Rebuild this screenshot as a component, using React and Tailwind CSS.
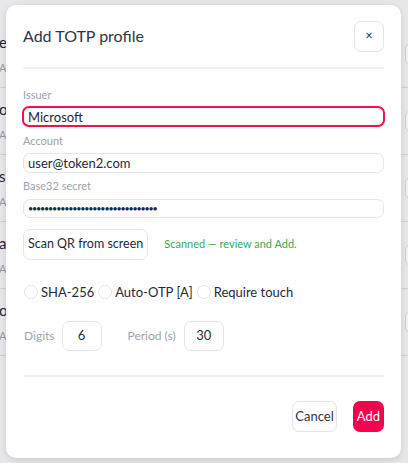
import { useState } from 'react'

const FONT = { fontFamily: 'Lato, "Noto Sans", sans-serif' }

// background list rows (mostly hidden behind the dialog)
const ROWS = ['e', 'o', 's', 'a', 'o']

function Radio({ label }) {
  return (
    <label className="flex items-center gap-[3px]">
      <span className="w-[14px] h-[14px] rounded-full border border-[#e3e5ec] bg-white" />
      <span className="text-[13px] leading-[14px] text-[#1f2937]">{label}</span>
    </label>
  )
}

function Field({ label, children, mt }) {
  return (
    <div className={mt}>
      <div className="text-[11px] leading-[14px] text-[#9ca3af]">{label}</div>
      {children}
    </div>
  )
}

export default function App() {
  const [issuer, setIssuer] = useState('Microsoft')
  const [account, setAccount] = useState('user@token2.com')

  return (
    <div className="relative w-[408px] h-[463px] overflow-hidden bg-[#f4f4f6]" style={FONT}>
      {/* page behind */}
      <div className="flex flex-col pt-[21px]">
        {ROWS.map((c, i) => (
          <div key={i} className="flex justify-between items-center h-[67px] border-b border-[#dcdce0]">
            <div className="-ml-[1px] flex flex-col gap-[10px]">
              <span className="text-[15px] leading-[18px] text-[#1f2937]">{c}</span>
              <span className="text-[11px] leading-[14px] text-[#9ca3af]">A</span>
            </div>
            <div className="w-[30px] h-[22px] mr-[-27px] rounded-md border border-[#d9d9de] bg-white" />
          </div>
        ))}
      </div>
      <div className="absolute inset-0 bg-black/[0.05]" />

      {/* dialog */}
      <div className="absolute left-[6px] top-[5px] w-[395px] h-[453px] rounded-[10px] bg-white shadow-[0_2px_6px_rgba(0,0,0,0.12)] px-[17px] pt-4">
        <div className="flex items-center justify-between h-[30px]">
          <h2 className="text-[16px] leading-[22px] text-[#2d3446]">Add TOTP profile</h2>
          <button className="w-[30px] h-[31px] rounded-[7px] border border-[#e3e5ec] bg-white flex items-center justify-center text-[13px] text-[#2d3446]">
            ×
          </button>
        </div>
        <div className="mt-4 h-[2px] bg-[#eef0f5]" />

        <Field label="Issuer" mt="mt-[19px]">
          <input
            value={issuer}
            onChange={e => setIssuer(e.target.value)}
            className="mt-1 block w-[363px] -ml-[1px] h-[21px] rounded-[7px] border-2 border-[#f0124a] pl-[4px] text-[13px] text-[#1f2937] outline-none"
          />
        </Field>
        <Field label="Account" mt="mt-[7px]">
          <input
            value={account}
            onChange={e => setAccount(e.target.value)}
            className="mt-[5px] block w-full h-[20px] rounded-[7px] border border-[#e3e5ec] pl-[4px] text-[13px] text-[#1f2937] outline-none"
          />
        </Field>
        <Field label="Base32 secret" mt="mt-[6px]">
          <input
            type="password"
            defaultValue="JBSWY3DPEHPK3PXPJBSWY3DPEHPK3PXP"
            className="mt-[6px] block w-full h-[19px] rounded-[7px] border border-[#e3e5ec] pl-[4px] text-[9px] tracking-[-1.2px] text-[#1f2937] outline-none"
          />
        </Field>

        <div className="mt-[11px] flex items-center gap-4">
          <button className="h-[31px] px-[4px] whitespace-nowrap rounded-[7px] border border-[#e3e5ec] bg-white text-[12.5px] text-[#1f2937]">
            Scan QR from screen
          </button>
          <span className="text-[11px] text-[#3aa65a] whitespace-nowrap">Scanned — review and Add.</span>
        </div>

        <div className="mt-[25px] flex items-center gap-[4px] ml-[1px]">
          <Radio label="SHA-256" />
          <Radio label="Auto-OTP [A]" />
          <Radio label="Require touch" />
        </div>

        <div className="mt-[22px] flex items-center">
          <span className="ml-[1px] text-[12px] text-[#9ca3af]">Digits</span>
          <div className="ml-[7px] w-[40px] h-[30px] rounded-[7px] border border-[#e3e5ec] flex items-center justify-center text-[13px] text-[#1f2937]">6</div>
          <span className="ml-[26px] text-[12px] text-[#9ca3af]">Period (s)</span>
          <div className="ml-[8px] w-[40px] h-[30px] rounded-[7px] border border-[#e3e5ec] flex items-center justify-center text-[13px] text-[#1f2937]">30</div>
        </div>

        <div className="mt-[24px] h-[2px] bg-[#eef0f5]" />

        <div className="mt-[24px] flex justify-end gap-4">
          <button className="h-[31px] px-[2px] rounded-[7px] border border-[#e3e5ec] bg-white text-[13px] text-[#2d3446]">
            Cancel
          </button>
          <button className="h-[31px] px-[4px] rounded-[7px] bg-[#f5004c] text-[13px] text-white">
            Add
          </button>
        </div>
      </div>
    </div>
  )
}
